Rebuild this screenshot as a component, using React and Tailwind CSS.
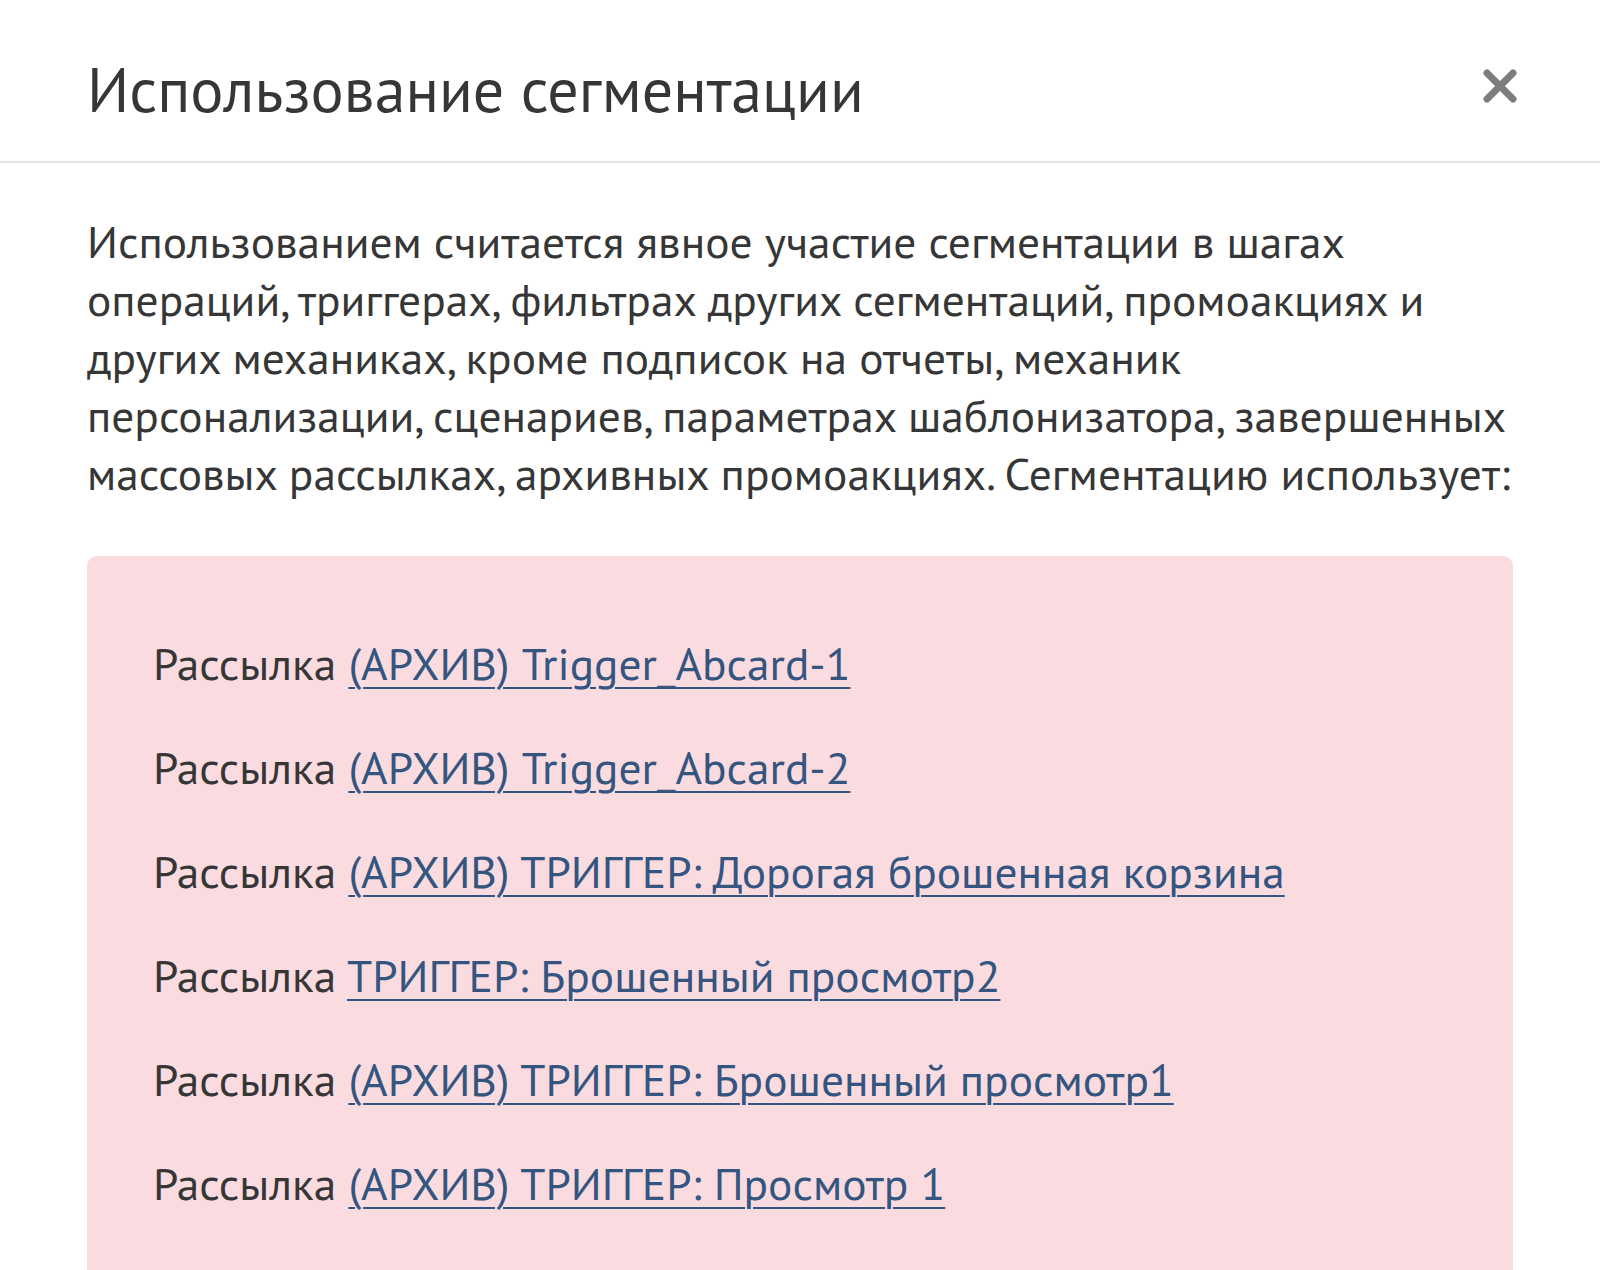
const usages = [
  '(АРХИВ) Trigger_Abcard-1',
  '(АРХИВ) Trigger_Abcard-2',
  '(АРХИВ) ТРИГГЕР: Дорогая брошенная корзина',
  'ТРИГГЕР: Брошенный просмотр2',
  '(АРХИВ) ТРИГГЕР: Брошенный просмотр1',
  '(АРХИВ) ТРИГГЕР: Просмотр 1',
];

function CloseIcon() {
  return (
    <svg viewBox="0 0 36 36" className="w-[36px] h-[36px]" fill="none" stroke="#7d7d7d" strokeWidth="7" strokeLinecap="round">
      <path d="M5 5 L31 31 M31 5 L5 31" />
    </svg>
  );
}

export default function App() {
  return (
    <div className="min-h-screen bg-white text-[#363636] font-['PT_Sans','Open_Sans',sans-serif]">
      {/* Header */}
      <div className="flex items-start justify-between pl-[87px] pr-[82px] pt-[59px] pb-[42px] border-b-2 border-[#e2e2e2]">
        <h2 className="text-[62px] leading-[60px] font-normal">Использование сегментации</h2>
        <button className="mt-[9px] w-[36px] h-[36px] flex items-center justify-center">
          <CloseIcon />
        </button>
      </div>

      {/* Body */}
      <div className="px-[87px] pt-[50px]">
        <p className="text-[45.4px] leading-[58px]">
          Использованием считается явное участие сегментации в шагах операций, триггерах, фильтрах других
          сегментаций, промоакциях и других механиках, кроме подписок на отчеты, механик персонализации,
          сценариев, параметрах шаблонизатора, завершенных массовых рассылках, архивных промоакциях.
          Сегментацию использует:
        </p>

        <div className="mt-[53px] bg-[#fadbe0] rounded-[10px] pl-[66px] pr-[40px] pt-[79px] pb-[81px]">
          <ul className="flex flex-col gap-[46px]">
            {usages.map((name) => (
              <li key={name} className="text-[45.4px] leading-[58px]">
                Рассылка{' '}
                <a href="#" className="text-[#33557f] underline decoration-2 underline-offset-[7px]">
                  {name}
                </a>
              </li>
            ))}
          </ul>
        </div>
      </div>
    </div>
  );
}
